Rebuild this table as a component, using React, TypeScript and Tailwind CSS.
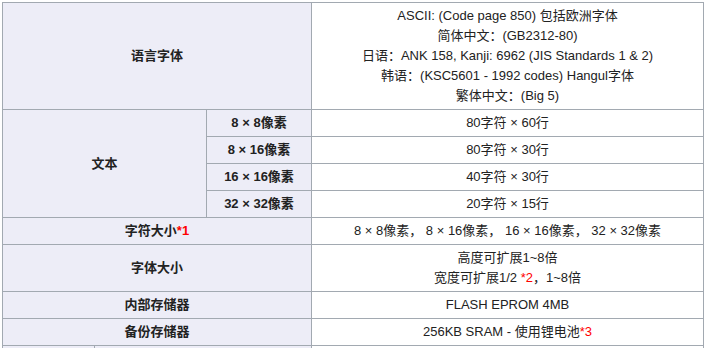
import React from "react";

const H = "bg-[#ededf7] font-bold text-[#222] flex items-center justify-center text-center py-[3px]";
const D = "bg-white text-[#222] flex flex-col items-center justify-center text-center py-[3px]";
const R = ({ children }: { children: React.ReactNode }) => <span className="text-[#f00]">{children}</span>;

export default function App() {
  return (
    <div
      className="w-[705px] h-[348px] overflow-hidden bg-white pl-[2px] pt-[2px] text-[13px] leading-[20px]"
      style={{ fontFamily: '"Liberation Sans", Arial, "Noto Sans CJK SC", sans-serif' }}
    >
      <div className="grid w-[702px] grid-cols-[203px_104px_391px] grid-rows-[106px_26px_26px_26px_26px_26px_46px_26px_26px] gap-px bg-[#a2a9b1] p-px">
        <div className={`${H} col-span-2`}>语言字体</div>
        <div className={D}>
          <div>ASCII: (Code page 850) 包括欧洲字体</div>
          <div>简体中文：(GB2312-80)</div>
          <div>日语：ANK 158, Kanji: 6962 (JIS Standards 1 &amp; 2)</div>
          <div>韩语：(KSC5601 - 1992 codes) Hangul字体</div>
          <div>繁体中文：(Big 5)</div>
        </div>

        <div className={`${H} row-span-4`}>文本</div>
        <div className={H}>8 × 8像素</div>
        <div className={D}>80字符 × 60行</div>
        <div className={H}>8 × 16像素</div>
        <div className={D}>80字符 × 30行</div>
        <div className={H}>16 × 16像素</div>
        <div className={D}>40字符 × 30行</div>
        <div className={H}>32 × 32像素</div>
        <div className={D}>20字符 × 15行</div>

        <div className={`${H} col-span-2`}>
          字符大小<R>*1</R>
        </div>
        <div className={D}>8 × 8像素， 8 × 16像素， 16 × 16像素， 32 × 32像素</div>

        <div className={`${H} col-span-2`}>字体大小</div>
        <div className={D}>
          <div>高度可扩展1~8倍</div>
          <div>
            宽度可扩展1/2 <R>*2</R>，1~8倍
          </div>
        </div>

        <div className={`${H} col-span-2`}>内部存储器</div>
        <div className={D}>FLASH EPROM 4MB</div>

        <div className={`${H} col-span-2`}>备份存储器</div>
        <div className={D}>
          <div>
            256KB SRAM - 使用锂电池<R>*3</R>
          </div>
        </div>
      </div>
      <div className="grid w-[702px] grid-cols-[91px_216px_391px] gap-px bg-[#a2a9b1] px-px pb-px">
        <div className={`${H} h-[26px]`}></div>
        <div className={`${H} h-[26px]`}></div>
        <div className={`${D} h-[26px]`}></div>
      </div>
    </div>
  );
}
